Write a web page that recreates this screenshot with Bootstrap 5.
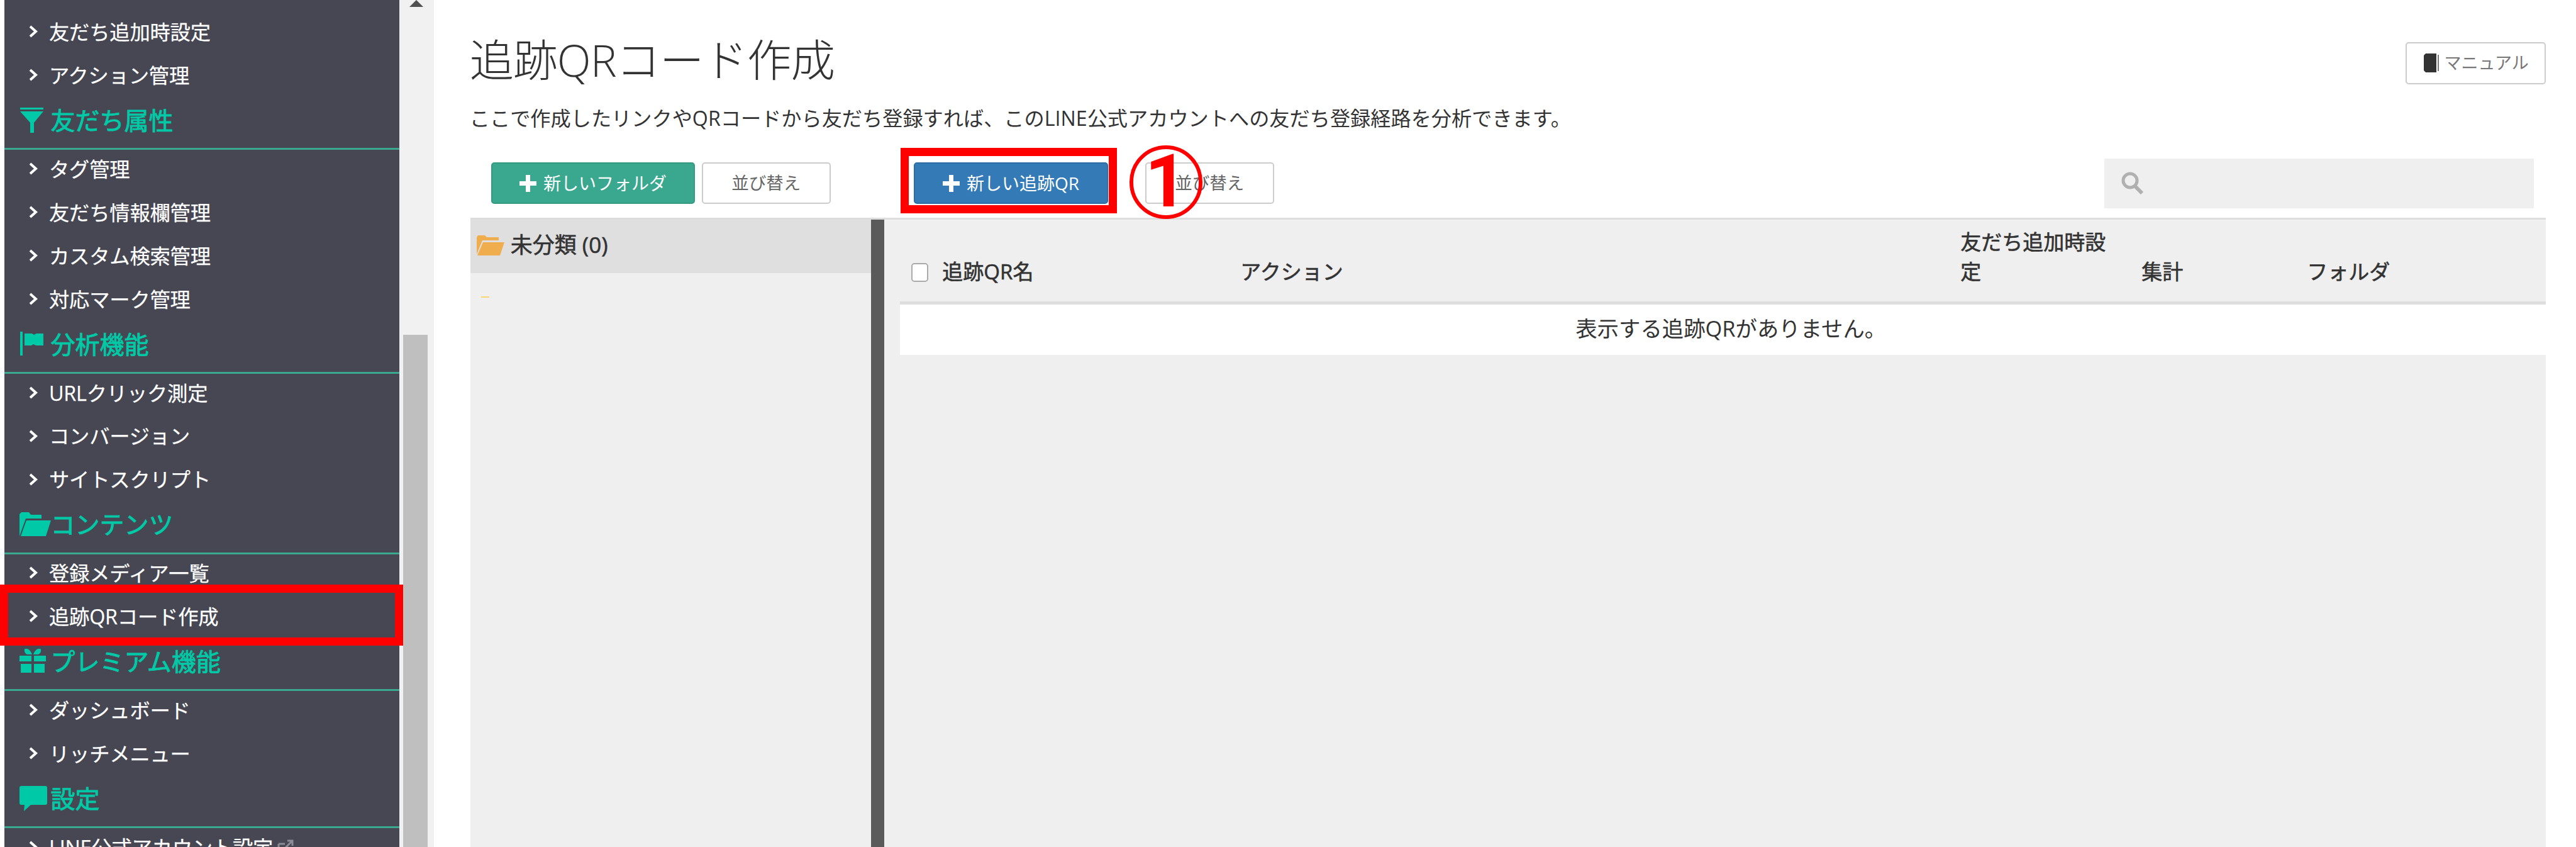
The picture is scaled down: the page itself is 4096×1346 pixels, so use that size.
<!DOCTYPE html>
<html lang="ja">
<head>
<meta charset="utf-8">
<title>追跡QRコード作成</title>
<link href="https://cdn.jsdelivr.net/npm/bootstrap@5.3.0/dist/css/bootstrap.min.css" rel="stylesheet">
<style>
html,body{height:100%;overflow:hidden;background:#fff}
body{font-family:"Open Sans","Noto Sans CJK JP",sans-serif;color:#333;position:relative}
.app-shell{height:1346px}
.side-panel{margin-left:6.5px;width:628.3px;background:#464752;padding-top:20.5px;overflow:hidden;flex:none}
.side-item{height:68.9px;padding:0 0 9px 37.5px;color:#fff;font-size:32.3px;display:flex;align-items:center;white-space:nowrap;letter-spacing:-.2px;-webkit-text-stroke:.25px #fff}
.side-item svg.chev{width:18px;height:20px;margin-right:16px;flex:none}
.side-head{height:80px;border-bottom:3.7px solid #3aa98f;padding:0 0 11px 24px;color:#00c9a7;font-size:39px;font-weight:400;-webkit-text-stroke:.9px #00c9a7;display:flex;align-items:center;white-space:nowrap}
.side-head svg{flex:none;width:50px;height:40px;margin-right:0}
.ext-mark{width:28px;height:26px;margin-left:6px}
.scroll-track{width:55.4px;background:#f1f1f1;flex:none;position:relative;padding:531.6px 10px 0 6.5px}
.scroll-up{position:absolute;left:16px;top:0;width:22px;height:11px;display:block}
.scroll-thumb{height:100%;background:#bfbfbf}
.main-area{padding:0 48.3px 0 57.6px;min-width:0}
.page-title{font-size:70.5px;font-weight:300;line-height:80px;margin:55px 0 0 -1px;color:#333;letter-spacing:-1px}
.manual-btn{margin-top:66.5px;width:223px;height:67.8px;border:2px solid #ccc;border-radius:5px;background:#fff;color:#777;font-size:27px;padding:0}
.manual-btn svg{width:27px;height:30px;margin-right:8px}
.title-bar{height:135px}
.lead-note{font-size:32.2px;line-height:40px;margin:32.6px 0 44px -1px;color:#333;white-space:nowrap}
.tool-row{height:79px;padding-left:33.5px}
.act-btn{height:66px;border-radius:5px;font-size:28px;padding:0;color:#fff;white-space:nowrap}
.act-btn svg{width:27px;height:27px;margin-right:11px}
.act-green{width:323.4px;background:#3aa88f;border:2px solid #34997f}
.act-green:hover{background:#3aa88f;color:#fff}
.act-blue{width:309.5px;background:#337ab7;border:2px solid #2e6da4;margin-left:132px}
.act-sort{width:205px;background:#fff;border:2px solid #ccc;color:#666;font-size:27.5px}
.gap-sort{margin-left:11px}
.gap-sort-b{margin-left:58.5px}
.search-box{width:683px;height:79px;background:#efefef;margin-right:18.6px;padding-left:26px}
.search-box svg{width:37px;height:36px}
.panes{margin-top:15.8px;border-top:3px solid #ddd;background:#efefef;height:1000px}
.folder-pane{width:637.6px;flex:none}
.folder-row{height:84.6px;background:#dfdfdf;padding:0 0 4px 10px;font-size:35px;-webkit-text-stroke:.6px #333;color:#333}
.folder-row svg{width:44px;height:32px;margin-right:10px}
.folder-tick{width:13px;height:2px;background:#f5d76e;margin:37px 0 0 17px}
.pane-split{width:20.4px;background:#5a5a5a;flex:none}
.list-pane{padding-left:25px;min-width:0}
.qr-table{table-layout:fixed;width:100%;margin:0;--bs-table-bg:transparent;font-size:33px;line-height:47.4px}
.qr-table th{font-weight:400;-webkit-text-stroke:.6px #333;vertical-align:bottom;padding:11.6px 18.6px 23px;border-bottom:5.5px solid #ddd;color:#333}
.qr-table td{background:#fff;height:82.7px;padding:0 0 4px 26px;text-align:center;vertical-align:middle;border:0;font-size:34.4px;color:#333}
.qr-table .form-check-input{width:27px;height:30px;margin:0 22px 0 0;vertical-align:-4px;border:2px solid #aaa;border-radius:5px}
.mark-box{position:absolute;border:14px solid #f00;pointer-events:none}
.mark-side{left:0;top:928.5px;width:640.5px;height:97.5px;border-width:13.5px}
.mark-new{left:1431.5px;top:235px;width:344.8px;height:104.2px;border-width:13px}
.mark-ring{position:absolute;left:1796px;top:231.4px;width:116.2px;height:116.2px;border:6.5px solid #f00;border-radius:50%;color:#f00;font-family:Roboto,sans-serif;font-weight:700;font-size:116px;line-height:103px;text-align:center}
</style>
</head>
<body>
<div class="app-shell d-flex">
  <nav class="side-panel">
    <div class="side-item"><svg class="chev" viewBox="0 0 18 20"><path d="M4 2l9 8-9 8" fill="none" stroke="#fff" stroke-width="4"/></svg>友だち追加時設定</div>
    <div class="side-item"><svg class="chev" viewBox="0 0 18 20"><path d="M4 2l9 8-9 8" fill="none" stroke="#fff" stroke-width="4"/></svg>アクション管理</div>
    <div class="side-head"><svg viewBox="0 0 50 40"><path fill="#00c9a7" d="M1 0h37v3H1zM1 6h37L23 24v16h-6V24z"/></svg>友だち属性</div>
    <div class="side-item"><svg class="chev" viewBox="0 0 18 20"><path d="M4 2l9 8-9 8" fill="none" stroke="#fff" stroke-width="4"/></svg>タグ管理</div>
    <div class="side-item"><svg class="chev" viewBox="0 0 18 20"><path d="M4 2l9 8-9 8" fill="none" stroke="#fff" stroke-width="4"/></svg>友だち情報欄管理</div>
    <div class="side-item"><svg class="chev" viewBox="0 0 18 20"><path d="M4 2l9 8-9 8" fill="none" stroke="#fff" stroke-width="4"/></svg>カスタム検索管理</div>
    <div class="side-item"><svg class="chev" viewBox="0 0 18 20"><path d="M4 2l9 8-9 8" fill="none" stroke="#fff" stroke-width="4"/></svg>対応マーク管理</div>
    <div class="side-head"><svg viewBox="0 0 50 40"><path fill="#00c9a7" d="M1 0h4v38H1zM8 3h12l3 2 4-2h11v19H26l-4-2-3 2H8z"/></svg>分析機能</div>
    <div class="side-item"><svg class="chev" viewBox="0 0 18 20"><path d="M4 2l9 8-9 8" fill="none" stroke="#fff" stroke-width="4"/></svg>URLクリック測定</div>
    <div class="side-item"><svg class="chev" viewBox="0 0 18 20"><path d="M4 2l9 8-9 8" fill="none" stroke="#fff" stroke-width="4"/></svg>コンバージョン</div>
    <div class="side-item"><svg class="chev" viewBox="0 0 18 20"><path d="M4 2l9 8-9 8" fill="none" stroke="#fff" stroke-width="4"/></svg>サイトスクリプト</div>
    <div class="side-head"><svg viewBox="0 0 50 40"><path fill="#00c9a7" d="M0 38V3l3-3h12l3 4h17v6H10zM11 13h39l-8 25H2z"/></svg>コンテンツ</div>
    <div class="side-item"><svg class="chev" viewBox="0 0 18 20"><path d="M4 2l9 8-9 8" fill="none" stroke="#fff" stroke-width="4"/></svg>登録メディア一覧</div>
    <div class="side-item"><svg class="chev" viewBox="0 0 18 20"><path d="M4 2l9 8-9 8" fill="none" stroke="#fff" stroke-width="4"/></svg>追跡QRコード作成</div>
    <div class="side-head"><svg viewBox="0 0 50 40"><path fill="#00c9a7" d="M0 11h19v9H0zM23 11h19v9H23zM2 24h17v14H2zM23 24h17v14H23zM9 0c5-1 9 3 11 9h-7C9 9 6 2 9 0zM33 0c-5-1-9 3-11 9h7c4 0 7-7 4-9z"/></svg>プレミアム機能</div>
    <div class="side-item"><svg class="chev" viewBox="0 0 18 20"><path d="M4 2l9 8-9 8" fill="none" stroke="#fff" stroke-width="4"/></svg>ダッシュボード</div>
    <div class="side-item"><svg class="chev" viewBox="0 0 18 20"><path d="M4 2l9 8-9 8" fill="none" stroke="#fff" stroke-width="4"/></svg>リッチメニュー</div>
    <div class="side-head"><svg viewBox="0 0 50 40"><path fill="#00c9a7" d="M3 0h38a3 3 0 0 1 3 3v24a3 3 0 0 1-3 3H18L7 40l1-10H3a3 3 0 0 1-3-3V3a3 3 0 0 1 3-3z"/></svg>設定</div>
    <div class="side-item"><svg class="chev" viewBox="0 0 18 20"><path d="M4 2l9 8-9 8" fill="none" stroke="#fff" stroke-width="4"/></svg>LINE公式アカウント設定<svg class="ext-mark" viewBox="0 0 28 26"><path d="M3 8h10M3 8v15h15V14M14 14L25 3M17 3h8v8" fill="none" stroke="#8a8b94" stroke-width="3"/></svg></div>
  </nav>
  <div class="scroll-track">
    <svg class="scroll-up" viewBox="0 0 22 11"><path fill="#505050" d="M11 0l11 11H0z"/></svg>
    <div class="scroll-thumb"></div>
  </div>
  <main class="main-area flex-grow-1">
    <div class="title-bar d-flex justify-content-between align-items-start">
      <h1 class="page-title">追跡QRコード作成</h1>
      <button type="button" class="btn manual-btn d-flex align-items-center justify-content-center"><svg viewBox="0 0 27 30"><path fill="#333" d="M2 3l3-3h17v30H5l-3-3z"/><path fill="#777" d="M24 2h2v26h-2z"/></svg>マニュアル</button>
    </div>
    <p class="lead-note">ここで作成したリンクやQRコードから友だち登録すれば、このLINE公式アカウントへの友だち登録経路を分析できます。</p>
    <div class="tool-row d-flex align-items-center">
      <button type="button" class="btn act-btn act-green d-flex align-items-center justify-content-center"><svg viewBox="0 0 27 27"><path fill="#fff" d="M10 0h7v10h10v7H17v10h-7V17H0v-7h10z"/></svg>新しいフォルダ</button>
      <button type="button" class="btn act-btn act-sort gap-sort">並び替え</button>
      <button type="button" class="btn act-btn act-blue d-flex align-items-center justify-content-center"><svg viewBox="0 0 27 27"><path fill="#fff" d="M10 0h7v10h10v7H17v10h-7V17H0v-7h10z"/></svg>新しい追跡QR</button>
      <button type="button" class="btn act-btn act-sort gap-sort-b">並び替え</button>
      <div class="search-box ms-auto d-flex align-items-center"><svg viewBox="0 0 37 36"><circle cx="15" cy="14" r="11" fill="none" stroke="#b0b0b0" stroke-width="5"/><path d="M23 23l11 11" stroke="#b0b0b0" stroke-width="6"/></svg></div>
    </div>
    <div class="panes d-flex">
      <div class="folder-pane">
        <div class="folder-row d-flex align-items-center"><svg viewBox="0 0 44 32"><path fill="#f0ad4e" d="M0 30V3l2-3h11l3 3h19v5H9zM10 11h34l-7 21H1z"/></svg>未分類 (0)</div>
        <div class="folder-tick"></div>
      </div>
      <div class="pane-split"></div>
      <div class="list-pane flex-grow-1">
        <table class="table qr-table">
          <colgroup><col style="width:523px"><col style="width:1145px"><col style="width:288px"><col style="width:263px"><col></colgroup>
          <thead><tr>
            <th><input class="form-check-input" type="checkbox" aria-label="全選択">追跡QR名</th>
            <th>アクション</th>
            <th>友だち追加時設定</th>
            <th>集計</th>
            <th>フォルダ</th>
          </tr></thead>
          <tbody><tr><td colspan="5">表示する追跡QRがありません。</td></tr></tbody>
        </table>
      </div>
    </div>
  </main>
</div>
<div class="mark-box mark-side"></div>
<div class="mark-box mark-new"></div>
<div class="mark-ring">1</div>
<script src="https://cdn.jsdelivr.net/npm/bootstrap@5.3.0/dist/js/bootstrap.bundle.min.js"></script>
</body>
</html>
